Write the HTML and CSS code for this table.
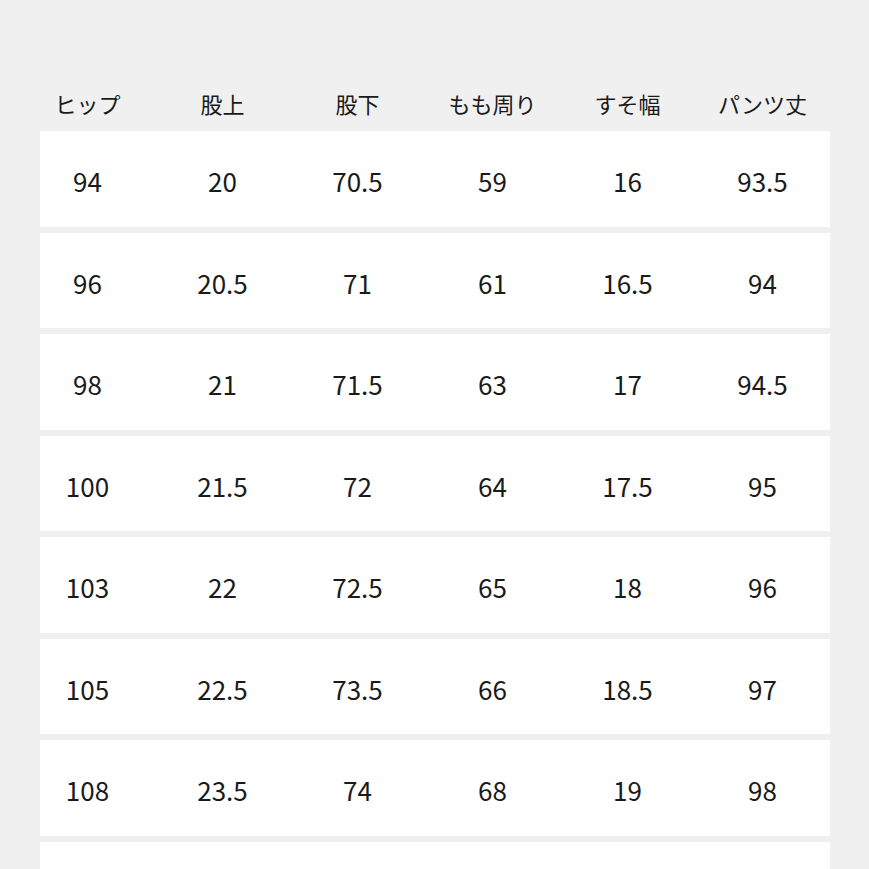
FILE: index.html
```html
<!DOCTYPE html>
<html lang="ja">
<head>
<meta charset="utf-8">
<link rel="stylesheet" href="styles.css">
</head>
<body>
<div class="page">
  <div class="head grid">
    <div>ヒップ</div><div>股上</div><div>股下</div><div>もも周り</div><div>すそ幅</div><div>パンツ丈</div>
  </div>
  <div class="rows">
    <div class="row"><div class="grid"><div>94</div><div>20</div><div>70.5</div><div>59</div><div>16</div><div>93.5</div></div></div>
    <div class="row"><div class="grid"><div>96</div><div>20.5</div><div>71</div><div>61</div><div>16.5</div><div>94</div></div></div>
    <div class="row"><div class="grid"><div>98</div><div>21</div><div>71.5</div><div>63</div><div>17</div><div>94.5</div></div></div>
    <div class="row"><div class="grid"><div>100</div><div>21.5</div><div>72</div><div>64</div><div>17.5</div><div>95</div></div></div>
    <div class="row"><div class="grid"><div>103</div><div>22</div><div>72.5</div><div>65</div><div>18</div><div>96</div></div></div>
    <div class="row"><div class="grid"><div>105</div><div>22.5</div><div>73.5</div><div>66</div><div>18.5</div><div>97</div></div></div>
    <div class="row"><div class="grid"><div>108</div><div>23.5</div><div>74</div><div>68</div><div>19</div><div>98</div></div></div>
    <div class="row row-cut"></div>
  </div>
</div>
</body>
</html>
```
FILE: styles.css
```css
html, body {
  margin: 0;
  padding: 0;
  background: #f0f0f0;
}
body {
  font-family: "Noto Sans CJK JP", "Noto Sans", sans-serif;
  color: #1a1a1a;
  height: 869px;
  overflow: hidden;
}
.page {
  padding-top: 84px;
}
.grid {
  display: grid;
  grid-template-columns: repeat(6, 135px);
  margin-left: 20px;
  width: 810px;
  text-align: center;
}
.head {
  font-size: 22px;
  line-height: 38px;
  height: 38px;
  margin-bottom: 9px;
}
.rows {
  display: flex;
  flex-direction: column;
  gap: 6px;
  margin-left: 40px;
  width: 790px;
}
.row {
  background: #ffffff;
  height: 95.5px;
  display: flex;
  align-items: center;
  padding-top: 5px;
  box-sizing: border-box;
}
.row-cut {
  height: 28px;
}
.row .grid {
  margin-left: -20px;
  font-size: 26px;
  line-height: 36px;
}
```
